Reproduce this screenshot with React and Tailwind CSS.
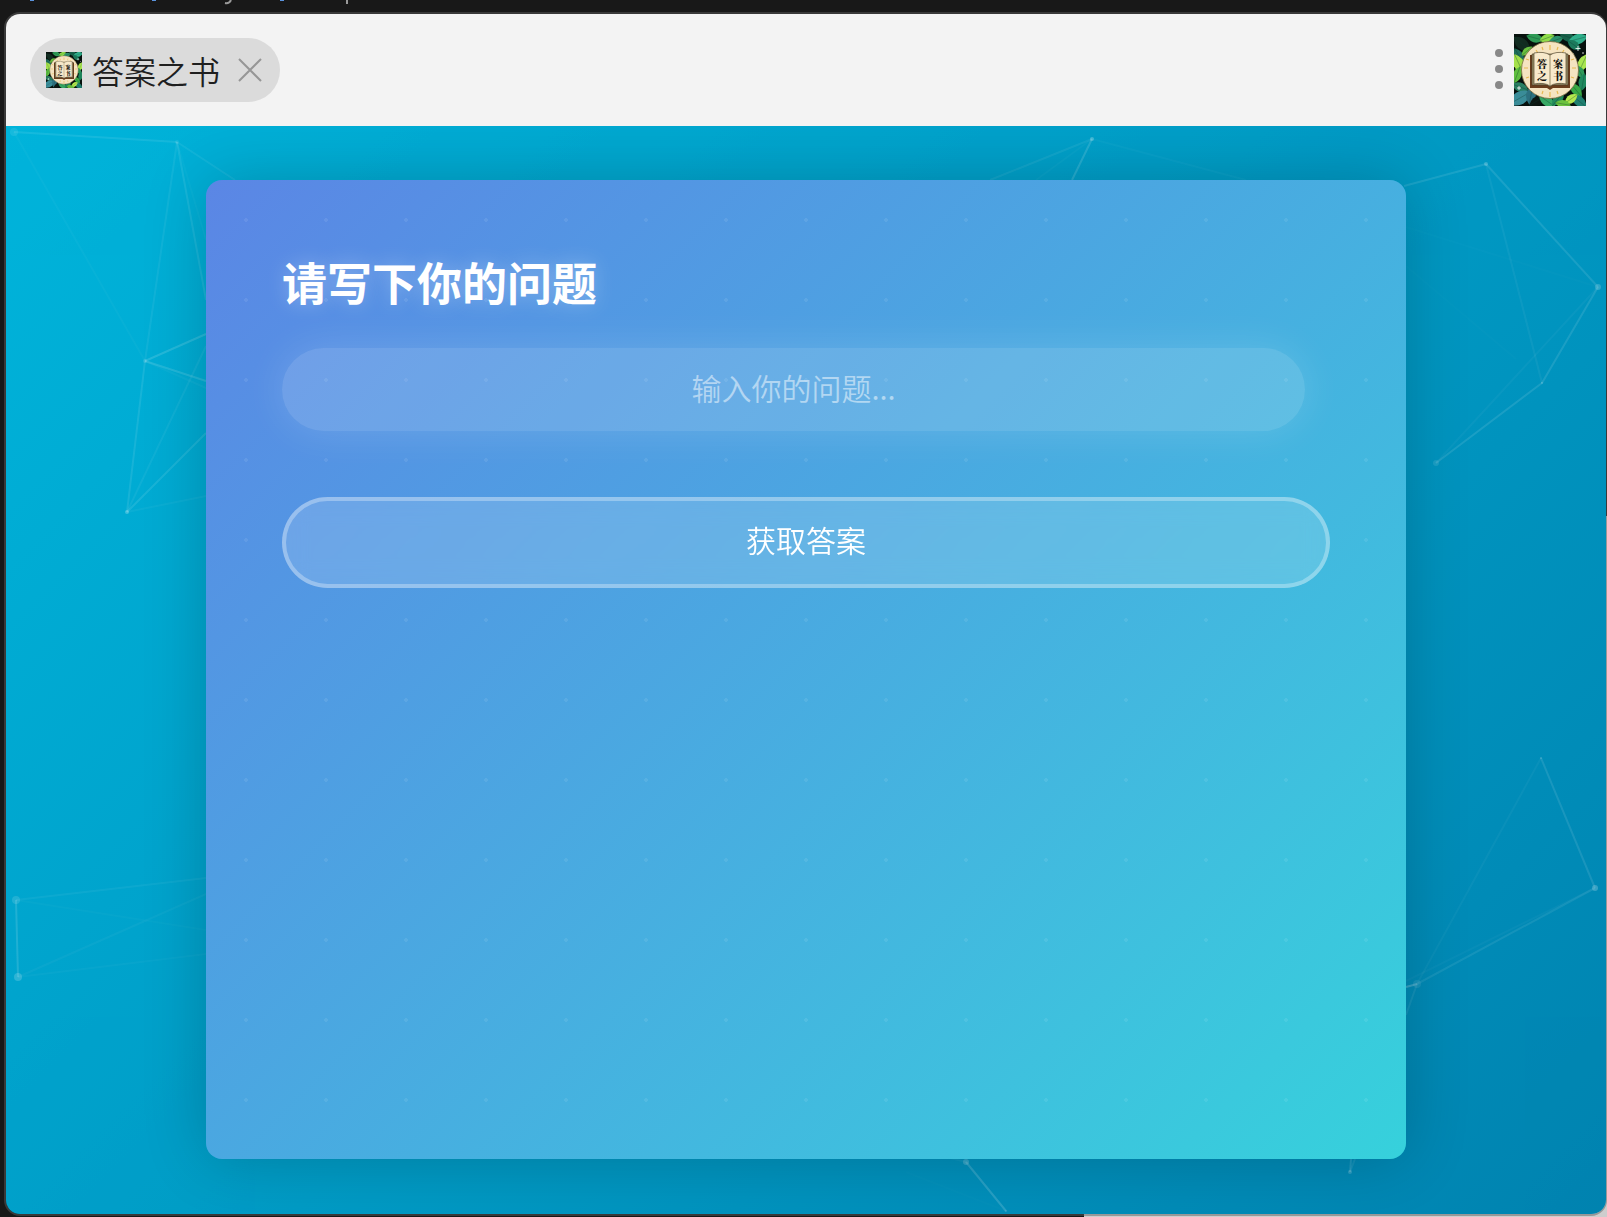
import { useState } from "react"

// Particle positions on the 1600 x 1088 backdrop: x, y, radius, opacity
const particles = [
  [8, 6, 4, 0.12],
  [171, 16, 2, 0.12],
  [139, 235, 2, 0.18],
  [121, 386, 2, 0.35],
  [10, 774, 4, 0.18],
  [12, 851, 4, 0.25],
  [1086, 13, 2, 0.35],
  [1480, 38, 2, 0.3],
  [1592, 161, 3, 0.25],
  [1536, 257, 1, 0.3],
  [1430, 337, 3, 0.15],
  [1535, 632, 1, 0.25],
  [1589, 762, 3, 0.3],
  [1411, 858, 4, 0.12],
  [1344, 1046, 2, 0.25],
  [960, 1036, 3, 0.25],
  [1000, 1085, 1, 0.2],
]

// x1, y1, x2, y2, opacity
const links = [
  [8, 6, 171, 16, 0.12],
  [8, 6, 139, 235, 0.04],
  [171, 16, 229, 54, 0.09],
  [171, 16, 139, 235, 0.09],
  [171, 16, 200, 174, 0.12],
  [171, 16, 200, 114, 0.04],
  [139, 235, 200, 208, 0.2],
  [139, 235, 200, 255, 0.18],
  [139, 235, 200, 262, 0.05],
  [139, 235, 121, 386, 0.13],
  [121, 386, 200, 220, 0.08],
  [121, 386, 200, 307, 0.14],
  [121, 386, 200, 370, 0.06],
  [10, 774, 12, 851, 0.18],
  [10, 774, 200, 752, 0.07],
  [10, 774, 200, 804, 0.03],
  [12, 851, 200, 768, 0.05],
  [12, 851, 200, 828, 0.04],
  [1086, 13, 984, 54, 0.09],
  [1086, 13, 1030, 54, 0.04],
  [1086, 13, 1066, 54, 0.2],
  [1086, 13, 1240, 54, 0.04],
  [1480, 38, 1398, 60, 0.14],
  [1480, 38, 1592, 161, 0.14],
  [1480, 38, 1536, 257, 0.07],
  [1592, 161, 1536, 257, 0.15],
  [1592, 161, 1430, 337, 0.05],
  [1536, 257, 1430, 337, 0.15],
  [1592, 161, 1400, 101, 0.02],
  [1400, 140, 1510, 233, 0.02],
  [1535, 632, 1589, 762, 0.14],
  [1535, 632, 1411, 858, 0.05],
  [1589, 762, 1411, 858, 0.11],
  [1589, 762, 1400, 855, 0.04],
  [1411, 858, 1400, 861, 0.3],
  [1411, 858, 1400, 889, 0.1],
  [1344, 1046, 1345, 1033, 0.16],
  [1344, 1046, 1349, 1033, 0.1],
  [960, 1036, 1000, 1085, 0.22],
  [960, 1036, 944, 1032, 0.05],
  [900, 1046, 1000, 1085, 0.02],
]

// Leaves around the logo: x, y, length, angle, color
const leaves = [
  [8, 10, 11, 40, "#122b20"],
  [21, 4, 9, 15, "#2f9a55"],
  [33, 4, 8, 160, "#8fdc4a"],
  [42, 6, 8, -20, "#2a8f6a"],
  [54, 3, 9, 20, "#17614a"],
  [64, 5, 10, -15, "#2fae8a"],
  [60, 11, 8, 35, "#1c7a5c"],
  [5, 22, 9, 60, "#1f6f5c"],
  [5, 30, 11, 65, "#a4e04a"],
  [13, 17, 7, -40, "#6cc23f"],
  [3, 41, 9, 110, "#5fbf3f"],
  [69, 29, 10, 115, "#a9e650"],
  [66, 38, 8, 60, "#2e9a5a"],
  [69, 48, 9, 100, "#1f8a5f"],
  [62, 56, 9, 50, "#39a845"],
  [6, 53, 9, 20, "#2a7f62"],
  [6, 64, 13, -30, "#3b8c98"],
  [17, 61, 10, 100, "#2e7280"],
  [23, 67, 9, 150, "#0c1612"],
  [33, 67, 10, 35, "#39a865"],
  [44, 65, 9, -50, "#238a5c"],
  [65, 67, 10, 40, "#217f70"],
  [57, 65, 8, -35, "#b3e84e"],
  [49, 70, 8, 10, "#6cc23f"],
]

function BookLogo({ className }) {
  return (
    <svg viewBox="0 0 72 72" className={className} role="img" aria-label="答案之书">
      <rect width="72" height="72" fill="#07110d" />
      {leaves.map(([x, y, len, angle, color], i) => (
        <g key={i} transform={`translate(${x} ${y}) rotate(${angle})`}>
          <path d={`M${-len} 0Q0 ${-len} ${len} 0Q0 ${len} ${-len} 0Z`} fill={color} />
          <path d={`M${-len} 0H${len}`} stroke="#0b3b2e" strokeWidth="0.5" opacity="0.6" />
        </g>
      ))}
      <path d="M64 12v5M61.500 14.500h5M59 19v3M69 18v2M5 52v4M3 54h4" stroke="#fff" strokeWidth="0.8" />
      <circle cx="36" cy="36" r="28.500" fill="#f5e4c1" stroke="#7a6b3f" strokeWidth="0.8" />
      <path
        d="M36 11v5M28 13l1 3M44 13l-1 3M22 16l2 3M50 16l-2 3M10 34h4M58 34h4M12 25l3 1M60 25l-3 1M12 44l3-1M60 44l-3-1M36 58v5M28 60l1-3M44 60l-1-3"
        stroke="#e9ba52"
        strokeWidth="1.200"
      />
      <path d="M16 21h40v33H39l-3 2-3-2H16Z" fill="#693d1c" />
      <path d="M18 20h36v31H38l-2 2-2-2H18Z" fill="#9c9068" stroke="#443b28" strokeWidth="0.6" />
      <path d="M20 19q10-2 16 2 6-4 16-2v31q-10-2-16 2-6-4-16-2Z" fill="#f7e9cb" stroke="#51482f" strokeWidth="0.7" />
      <path d="M36 21v31" stroke="#81724c" strokeWidth="0.8" />
      <g
        className="font-['Noto_Serif_CJK_SC','Noto_Sans_CJK_SC',serif] font-black"
        fontSize="10"
        fill="#15120d"
        textAnchor="middle"
      >
        <text x="28" y="34">答</text>
        <text x="28" y="46">之</text>
        <text x="44" y="34">案</text>
        <text x="44" y="46">书</text>
      </g>
    </svg>
  )
}

// Whatever is open behind the window, only its edges are visible
function Desktop() {
  return (
    <div className="absolute inset-0 flex flex-col justify-between bg-[#181818]" aria-hidden="true">
      <svg viewBox="0 0 400 12" className="h-3 w-[400px]" fill="none" strokeWidth="2">
        <path d="M30 0h4M152 0h4M280 0h4" stroke="#5b93dd" />
        <path d="M231 0q-2 4-6 3M347 0v4" stroke="#9a9a9a" />
      </svg>
      <div className="ml-auto h-[701px] w-[523px] bg-[#cdcdcd]" />
    </div>
  )
}

function TitleBar({ onClose }) {
  return (
    <header className="relative z-10 flex h-28 shrink-0 items-center justify-between bg-[#f3f3f3] pr-5 pl-6">
      <div className="flex h-16 items-center rounded-full bg-[#dbdbdb] pr-[18px] pl-4">
        <BookLogo className="size-9" />
        <span className="ml-2.5 text-[32px] leading-10 font-[350] text-[#1f1f1f]">答案之书</span>
        <button type="button" aria-label="关闭" onClick={onClose} className="ml-[18px]">
          <svg viewBox="0 0 24 24" className="size-6" stroke="#969696" strokeWidth="2">
            <path d="M1 1l22 22M23 1L1 23" />
          </svg>
        </button>
      </div>
      <div className="flex items-center gap-[11px]">
        <button type="button" aria-label="菜单" className="flex flex-col gap-2 pb-0.5">
          <span className="size-2 rounded-full bg-[#888]" />
          <span className="size-2 rounded-full bg-[#888]" />
          <span className="size-2 rounded-full bg-[#888]" />
        </button>
        <BookLogo className="size-18" />
      </div>
    </header>
  )
}

function Particles() {
  return (
    <svg
      viewBox="0 0 1600 1088"
      preserveAspectRatio="xMidYMid slice"
      className="absolute inset-0 size-full opacity-70"
      aria-hidden="true"
    >
      {links.map(([x1, y1, x2, y2, opacity], i) => (
        <line key={i} x1={x1} y1={y1} x2={x2} y2={y2} stroke="#fff" strokeWidth="2" opacity={opacity} />
      ))}
      {particles.map(([x, y, r, opacity], i) => (
        <circle key={i} cx={x} cy={y} r={r} fill="#fff" opacity={opacity} />
      ))}
    </svg>
  )
}

export default function App() {
  const [question, setQuestion] = useState("")

  return (
    <div className="relative flex min-h-screen flex-col pt-3 pb-px pl-1 font-['Noto_Sans_CJK_SC',sans-serif]">
      <Desktop />

      <div className="relative flex flex-1 flex-col overflow-hidden rounded-2xl border-y-2 border-r border-l-2 border-[#5f5f5f]/48 bg-clip-padding">
        <TitleBar onClose={() => setQuestion("")} />

        <main className="relative flex flex-1 flex-col items-center bg-[linear-gradient(135deg,#00b4db,#0083b0)] pt-[54px] pb-[55px]">
          <Particles />

          {/* Question card */}
          <form
            onSubmit={(e) => e.preventDefault()}
            className="relative flex w-3/4 flex-1 flex-col rounded-2xl bg-[radial-gradient(circle,rgba(255,255,255,0.08)_2px,transparent_2px),linear-gradient(135deg,#5b86e5,#36d1dc)] bg-size-[80px_80px,100%_100%] px-[76px] pt-[72px] font-['KaiTi','STKaiti','Noto_Sans_CJK_SC',serif] text-white shadow-[0_0_64px_rgba(0,0,0,0.2)]"
          >
            <label
              htmlFor="question"
              className="text-[45px] leading-[60px] font-bold [text-shadow:0_0_20px_rgba(255,255,255,0.3)]"
            >
              请写下你的问题
            </label>
            <input
              id="question"
              type="text"
              value={question}
              onChange={(e) => setQuestion(e.target.value)}
              placeholder="输入你的问题..."
              className="mt-9 mr-[25px] h-[83px] rounded-full bg-white/15 px-10 pb-1.5 text-center text-[30px] font-[350] shadow-[0_0_40px_rgba(255,255,255,0.15)] outline-none placeholder:text-white/50"
            />
            <button
              type="submit"
              className="mt-[66px] h-[91px] rounded-full border-4 border-white/30 bg-white/15 pb-1.5 text-[30px] font-[350] backdrop-blur-md"
            >
              获取答案
            </button>
          </form>
        </main>
      </div>
    </div>
  )
}
